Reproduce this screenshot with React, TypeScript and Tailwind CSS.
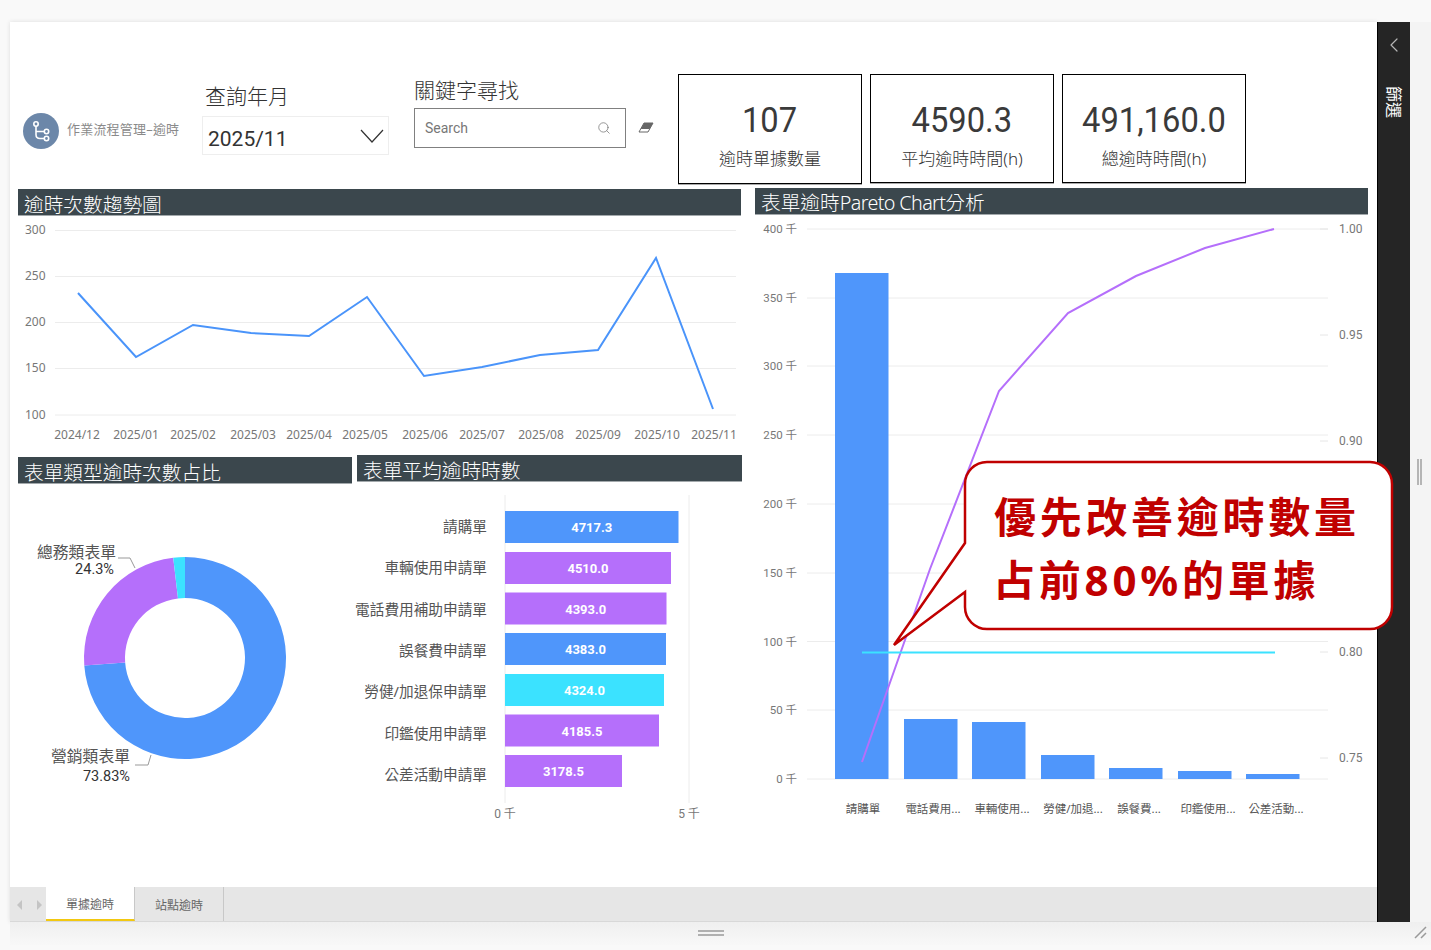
import React from "react";
import { Search, ChevronLeft } from "lucide-react";

const BLUE = "#4f96fb";
const PURPLE = "#b56ffb";
const CYAN = "#3be2ff";

function Title({ children, high }: { children: React.ReactNode; high?: boolean }) {
  return (
    <div className={`h-[27px] bg-[#3b474d] border-b border-[#a3a9ac] pl-[6px] text-white text-[19.7px] ${high ? "leading-[30px]" : "leading-[32px]"} font-light whitespace-nowrap`}>
      {children}
    </div>
  );
}

function Card({ value, label, tall }: { value: string; label: string; tall?: boolean }) {
  return (
    <div className={`w-[184px] ${tall ? "h-[110px]" : "h-[109px]"} border border-black shadow-[0_1px_0_#aaa] flex flex-col items-center`}>
      <div className="mt-[24px] h-[44px] text-[35px] leading-[44px] text-[#3a3a3a] font-['Roboto',sans-serif] scale-x-[0.935]">
        {value}
      </div>
      <div className="mt-[4px] text-[17px] leading-[24px] text-[#333] font-light">{label}</div>
    </div>
  );
}

function LineChart() {
  const grid = [
    [300, 230.5],
    [250, 276.5],
    [200, 322.5],
    [150, 368.5],
    [100, 415],
  ];
  const pts = "78,293 136,357 193,325 251,333 309,336 367,297 424,376 482,367 540,355 598,350 656,258 713,409";
  const xl = [
    ["2024/12", 77],
    ["2025/01", 136],
    ["2025/02", 193],
    ["2025/03", 253],
    ["2025/04", 309],
    ["2025/05", 365],
    ["2025/06", 425],
    ["2025/07", 482],
    ["2025/08", 541],
    ["2025/09", 598],
    ["2025/10", 657],
    ["2025/11", 714],
  ] as const;
  return (
    <svg width="724" height="240" viewBox="18 216 724 240" className="block">
      {grid.map(([v, y]) => (
        <g key={v}>
          <line x1="55" x2="736" y1={y} y2={y} stroke="#ececec" strokeWidth="1" />
          <text x="25" y={y + 3.6} className="fill-[#777] text-[12px]">{v}</text>
        </g>
      ))}
      <polyline points={pts} fill="none" stroke="#4a94fa" strokeWidth="2" />
      {xl.map(([t, x]) => (
        <text key={t} x={x} y="439" textAnchor="middle" className="fill-[#777] text-[12px]">{t}</text>
      ))}
    </svg>
  );
}

function arc(cx: number, cy: number, r0: number, r1: number, a0: number, a1: number) {
  const p = (r: number, a: number) => {
    const t = (a * Math.PI) / 180;
    return `${(cx + r * Math.sin(t)).toFixed(2)} ${(cy - r * Math.cos(t)).toFixed(2)}`;
  };
  const large = a1 - a0 > 180 ? 1 : 0;
  return `M${p(r1, a0)}A${r1} ${r1} 0 ${large} 1 ${p(r1, a1)}L${p(r0, a1)}A${r0} ${r0} 0 ${large} 0 ${p(r0, a0)}Z`;
}

function Donut() {
  return (
    <svg width="334" height="330" viewBox="18 484 334 330" className="block">
      <path d={arc(185, 658, 60, 101, 0, 265.8)} fill={BLUE} />
      <path d={arc(185, 658, 60, 101, 265.8, 353.3)} fill={PURPLE} />
      <path d={arc(185, 658, 60, 101, 353.3, 360)} fill={CYAN} />
      <polyline points="118,558 130,558 135,568" fill="none" stroke="#999" />
      <polyline points="135,765 148,765 151,755" fill="none" stroke="#999" />
      <text x="116" y="558" textAnchor="end" className="fill-[#555] text-[15.8px]">總務類表單</text>
      <text x="114" y="574" textAnchor="end" className="fill-[#333] text-[14.5px] font-['Roboto',sans-serif]">24.3%</text>
      <text x="130" y="762" textAnchor="end" className="fill-[#555] text-[15.8px]">營銷類表單</text>
      <text x="130" y="781" textAnchor="end" className="fill-[#333] text-[14.5px] font-['Roboto',sans-serif]">73.83%</text>
    </svg>
  );
}

function HBars() {
  const rows = [
    ["請購單", "4717.3", 173.5, 511, BLUE],
    ["車輛使用申請單", "4510.0", 166, 552, PURPLE],
    ["電話費用補助申請單", "4393.0", 161.5, 592.5, PURPLE],
    ["誤餐費申請單", "4383.0", 161, 633, BLUE],
    ["勞健/加退保申請單", "4324.0", 159, 674, CYAN],
    ["印鑑使用申請單", "4185.5", 154, 714.5, PURPLE],
    ["公差活動申請單", "3178.5", 117, 755, PURPLE],
  ] as const;
  return (
    <svg width="385" height="345" viewBox="357 482 385 345" className="block overflow-visible">
      <line x1="505" x2="505" y1="495" y2="803" stroke="#ececec" />
      <line x1="689" x2="689" y1="495" y2="803" stroke="#ececec" />
      {rows.map(([label, val, w, y, c], i) => (
        <g key={label}>
          <rect x="505" y={y} width={w} height="32" fill={c} />
          <text x="487" y={532 + 41.33 * i} textAnchor="end" className="fill-[#555] text-[14.67px]">{label}</text>
          <text x={505 + w / 2} y={y + 21} textAnchor="middle" className="fill-white text-[13px] font-bold font-['Roboto',sans-serif]">{val}</text>
        </g>
      ))}
      <text x="505" y="818" textAnchor="middle" className="fill-[#777] text-[12px] font-['Roboto','Noto_Sans_CJK_TC',sans-serif]">0 千</text>
      <text x="689" y="818" textAnchor="middle" className="fill-[#777] text-[12px] font-['Roboto','Noto_Sans_CJK_TC',sans-serif]">5 千</text>
    </svg>
  );
}

function Pareto() {
  const left = [
    ["400 千", 229],
    ["350 千", 298],
    ["300 千", 366],
    ["250 千", 435],
    ["200 千", 504],
    ["150 千", 573],
    ["100 千", 641.5],
    ["50 千", 710],
    ["0 千", 779],
  ] as const;
  const right = [
    ["1.00", 229],
    ["0.95", 335],
    ["0.90", 441],
    ["0.80", 652],
    ["0.75", 758],
  ] as const;
  const bars = [
    [835, 273],
    [904, 719],
    [972, 722],
    [1041, 755],
    [1109, 768],
    [1178, 771],
    [1246, 774],
  ];
  const cats = [
    ["請購單", 863],
    ["電話費用...", 933],
    ["車輛使用...", 1002],
    ["勞健/加退...", 1073],
    ["誤餐費...", 1139],
    ["印鑑使用...", 1208],
    ["公差活動...", 1276],
  ] as const;
  return (
    <svg width="613" height="616" viewBox="755 215 613 616" className="block">
      {left.map(([t, y]) => (
        <g key={t}>
          <line x1="807" x2="1328" y1={y} y2={y} stroke="#ececec" />
          <text x="797" y={y + 4} textAnchor="end" className="fill-[#777] text-[11.5px] font-['Roboto','Noto_Sans_CJK_TC',sans-serif]">{t}</text>
        </g>
      ))}
      {right.map(([t, y]) => (
        <g key={t}>
          <line x1="1320" x2="1328" y1={y} y2={y} stroke="#e6e6e6" />
          <text x="1339" y={y + 4} className="fill-[#777] text-[12px] font-['Roboto',sans-serif]">{t}</text>
        </g>
      ))}
      {bars.map(([x, y]) => (
        <rect key={x} x={x} y={y} width="53.5" height={779 - y} fill={BLUE} />
      ))}
      <polyline points="862,762 930,569 999,391 1068,313 1136,276 1205,248 1274,229" fill="none" stroke={PURPLE} strokeWidth="2" />
      <line x1="862" x2="1275" y1="652.5" y2="652.5" stroke={CYAN} strokeWidth="2" />
      {cats.map(([t, x]) => (
        <text key={t} x={x} y="813" textAnchor="middle" className="fill-[#555] text-[11.5px]">{t}</text>
      ))}
    </svg>
  );
}

function Callout() {
  return (
    <div className="absolute left-[890px] top-[459px] w-[506px] h-[190px] z-10 text-[#c00000] font-bold text-[42px] leading-[60px]">
      <svg width="506" height="190" viewBox="890 459 506 190" className="absolute inset-0">
        <path
          d="M987 462H1370A22 22 0 0 1 1392 484V607A22 22 0 0 1 1370 629H987A22 22 0 0 1 965 607V592L894 645L965 543V484A22 22 0 0 1 987 462Z"
          fill="#fff"
          stroke="#c00000"
          strokeWidth="2.5"
        />
      </svg>
      <div className="absolute left-[104px] top-[28px] whitespace-nowrap tracking-[3.7px]">優先改善逾時數量</div>
      <div className="absolute left-[103px] top-[91px] whitespace-nowrap tracking-[3.8px]">占前80%的單據</div>
    </div>
  );
}

export default function App() {
  return (
    <div className="relative w-[1431px] h-[950px] overflow-hidden bg-[#f9f9f9] font-['Noto_Sans','Noto_Sans_CJK_TC',sans-serif]">
      <div className="flex h-[922px] pt-[22px] pl-[10px]">
        <div className="w-[1367px] flex flex-col shadow-[0_0_4px_#ddd]">
          <main className="flex-1 bg-white flex flex-col">
            <header className="h-[166px] flex items-start pl-[13px] shrink-0">
              <div className="mt-[91px] w-[156px] flex items-center gap-[8px]">
                <div className="w-[36px] h-[36px] rounded-full bg-[#6c87a9] flex items-center justify-center shrink-0">
                  <svg width="36" height="36" viewBox="0 0 36 36" fill="none" stroke="#fff" strokeWidth="1.6">
                    <circle cx="13" cy="11" r="2.2" />
                    <circle cx="23.5" cy="18.5" r="2.2" />
                    <circle cx="23.5" cy="25.5" r="2.2" />
                    <path d="M13 13.2V21.5Q13 25.5 17 25.5H21.3M13 18.5H21.3" />
                  </svg>
                </div>
                <span className="text-[13px] tracking-[0.2px] text-[#8a8a8a] whitespace-nowrap -mt-[2px]">作業流程管理–逾時</span>
              </div>
              <div className="ml-[23px] w-[187px] mt-[57px]">
                <div className="pl-[3px] h-[37px] text-[21px] leading-[34px] text-[#333] font-light">查詢年月</div>
                <div className="h-[39px] border border-[#eee] flex items-center justify-between pl-[5px] pr-[4px]">
                  <span className="text-[21px] leading-[30px] text-[#333] font-['Roboto',sans-serif] pt-[6px]">2025/11</span>
                  <svg width="24" height="14" viewBox="0 0 24 14" fill="none" stroke="#333" strokeWidth="1.2">
                    <path d="M1 1L12 13L23 1" />
                  </svg>
                </div>
              </div>
              <div className="ml-[25px] w-[212px] mt-[52px]">
                <div className="h-[34px] text-[21px] leading-[32px] text-[#333] font-light">關鍵字尋找</div>
                <div className="h-[40px] border border-[#808080] flex items-center justify-between pl-[10px] pr-[14px]">
                  <span className="text-[14px] text-[#777] font-['Roboto',sans-serif] pt-[1px]">Search</span>
                  <Search size={14} strokeWidth={1.3} color="#777" />
                </div>
              </div>
              <svg width="16" height="11" viewBox="0 0 16 11" className="ml-[12px] mt-[100px]">
                <path d="M6 1H15L10 10H1Z" fill="#fff" stroke="#666" />
                <path d="M6 1H15L11.6 7H2.8Z" fill="#666" />
              </svg>
              <div className="ml-[24px] mt-[52px] flex gap-[8px]">
                <Card value="107" label="逾時單據數量" tall />
                <Card value="4590.3" label="平均逾時時間(h)" />
                <Card value="491,160.0" label="總逾時時間(h)" />
              </div>
            </header>
            <div className="flex pl-[8px] gap-[13px]">
              <section className="w-[724px] pt-[1px]">
                <div className="w-[723px]">
                  <Title>逾時次數趨勢圖</Title>
                </div>
                <LineChart />
                <div className="flex gap-[5px] items-start">
                  <div className="w-[334px] pt-[1px]">
                    <Title>表單類型逾時次數占比</Title>
                    <Donut />
                  </div>
                  <div className="w-[385px] -mt-[1px]">
                    <Title>表單平均逾時時數</Title>
                    <HBars />
                  </div>
                </div>
              </section>
              <section className="w-[613px]">
                <Title high>
                  表單逾時<span className="tracking-[-0.6px]">Pareto Chart</span>分析
                </Title>
                <Pareto />
              </section>
            </div>
          </main>
          <nav className="h-[35px] bg-[#e6e6e6] border-b border-[#d8d8d8] flex shrink-0">
            <div className="w-[36px] flex items-center justify-center gap-[15px] pl-[2px] pt-[1px]">
              <span className="w-0 h-0 border-y-[5px] border-y-transparent border-r-[5px] border-r-[#c4c4c4]" />
              <span className="w-0 h-0 border-y-[5px] border-y-transparent border-l-[5px] border-l-[#c4c4c4]" />
            </div>
            <div className="w-[89px] bg-white border-r border-r-[#c8c8c8] border-b-[2px] border-b-[#f2c811] flex items-center justify-center pt-[4px] text-[12px] text-[#666]">單據逾時</div>
            <div className="w-[89px] border-r border-r-[#c8c8c8] flex items-center justify-center pt-[4px] text-[12px] text-[#666]">站點逾時</div>
          </nav>
        </div>
        <aside className="w-[33px] bg-[#252525] border-l border-black flex flex-col items-center shrink-0">
          <ChevronLeft size={24} strokeWidth={1.2} color="#b5b5b5" className="mt-[11px]" />
          <span className="mt-[29px] text-white text-[16px] leading-[16px] [writing-mode:vertical-rl] [text-orientation:sideways]">篩選</span>
        </aside>
        <div className="w-[21px] flex items-center justify-center bg-[#f4f4f4] pr-[2px]">
          <div className="w-[5px] h-[26px] border-x-2 border-x-[#b5b5b5]" />
        </div>
      </div>
      <div className="h-[23px] ml-[10px] flex items-center justify-center relative bg-gradient-to-b from-[#efefef] to-[#f8f8f8]">
        <div className="w-[26px] h-[6px] border-y-2 border-y-[#b0b0b0] -ml-[20px] -mt-[2px]" />
        <svg width="13" height="13" viewBox="0 0 13 13" className="absolute right-[4px] top-[4px]" stroke="#9a9a9a" strokeWidth="1.5">
          <path d="M1 12L12 1M7 12L12 7" />
        </svg>
      </div>
      <Callout />
    </div>
  );
}
